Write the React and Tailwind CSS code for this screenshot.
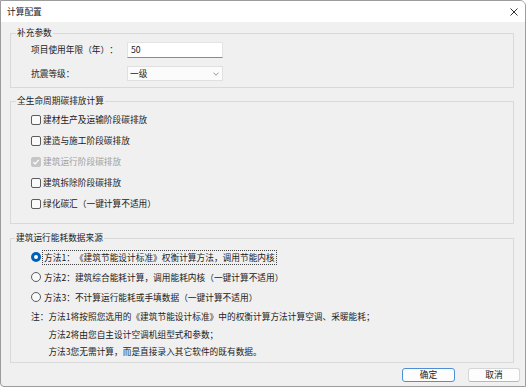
import React from "react";

const font = { fontFamily: '"Noto Sans CJK SC", "Noto Sans", sans-serif' };

function CheckBox({ label, checked, disabled }) {
  return (
    <div className="h-[21px] flex items-center">
      <div
        className={
          "w-[10px] h-[10px] rounded-[2px] border flex items-center justify-center " +
          (disabled
            ? "bg-[#c6c6c6] border-[#c6c6c6]"
            : "bg-[#fafafa] border-[#5c5c5c]")
        }
      >
        {checked && (
          <svg width="8" height="8" viewBox="0 0 8 8">
            <polyline points="1.2,4.2 3.2,6 6.8,1.8" fill="none" stroke="#fff" strokeWidth="1.2" />
          </svg>
        )}
      </div>
      <span className={"ml-[2px] " + (disabled ? "text-[#a0a0a0]" : "text-[#1a1a1a]")}>{label}</span>
    </div>
  );
}

function Radio({ label, selected, focused }) {
  return (
    <div className="h-[20px] flex items-center">
      {selected ? (
        <div className="w-[10px] h-[10px] rounded-full bg-[#005fb8] flex items-center justify-center">
          <div className="w-[4px] h-[4px] rounded-full bg-white" />
        </div>
      ) : (
        <div className="w-[10px] h-[10px] rounded-full border border-[#5c5c5c] bg-[#f8f8f8]" />
      )}
      <span
        className={
          "ml-[1px] px-[1px] leading-[13px] border " +
          (focused ? "border-dotted border-[#444]" : "border-transparent")
        }
      >
        {label}
      </span>
    </div>
  );
}

export default function App() {
  return (
    <div
      className="w-[527px] h-[388px] bg-white text-[8.7px] text-[#1a1a1a] [text-spacing-trim:space-all]"
      style={font}
    >
      <div className="w-[526px] h-[387px] border border-[#9c9c9c] rounded-tr-[6px] rounded-bl-[4px] bg-[#f0f0f0] flex flex-col overflow-hidden">
        {/* title bar */}
        <div className="h-[21px] shrink-0 bg-white flex items-center justify-between pl-[6px] pr-[7px]">
          <span className="leading-[12px]">计算配置</span>
          <svg width="8" height="8" viewBox="0 0 8 8">
            <path d="M0.5 0.5 L7.5 7.5 M7.5 0.5 L0.5 7.5" stroke="#333" strokeWidth="1" fill="none" />
          </svg>
        </div>

        <div className="flex flex-col pl-[9px] pr-[11px]">
          {/* group 1 */}
          <fieldset className="mt-[5px] border border-[#d9d9d9]">
            <legend className="ml-[5px] px-[1px] leading-[12px]">补充参数</legend>
            <div className="pl-[20px] pt-[3px] pb-[6px]">
              <div className="h-[16px] flex items-center">
                <span className="w-[96px]">项目使用年限（年）：</span>
                <div className="w-[96px] h-[16px] bg-white border border-[#e3e3e3] border-b-[#8a8a8a] flex items-center pl-[3px]">
                  50
                </div>
              </div>
              <div className="h-[15px] mt-[8px] flex items-center">
                <span className="w-[96px]">抗震等级：</span>
                <div className="w-[96px] h-[15px] bg-[#fbfbfb] border border-[#e0e0e0] flex items-center justify-between pl-[2px] pr-[3px]">
                  <span>一级</span>
                  <svg width="6" height="4" viewBox="0 0 6 4">
                    <polyline points="0.5,0.8 3,3.2 5.5,0.8" fill="none" stroke="#8a8a8a" strokeWidth="0.9" />
                  </svg>
                </div>
              </div>
            </div>
          </fieldset>

          {/* group 2 */}
          <fieldset className="mt-[7px] border border-[#d9d9d9]">
            <legend className="ml-[5px] px-[1px] leading-[12px]">全生命周期碳排放计算</legend>
            <div className="pl-[20px] pt-[2px] pb-[9px]">
              <CheckBox label="建材生产及运输阶段碳排放" />
              <CheckBox label="建造与施工阶段碳排放" />
              <CheckBox label="建筑运行阶段碳排放" checked disabled />
              <CheckBox label="建筑拆除阶段碳排放" />
              <CheckBox label="绿化碳汇（一键计算不适用）" />
            </div>
          </fieldset>

          {/* group 3 */}
          <fieldset className="mt-[8px] border border-[#d9d9d9]">
            <legend className="ml-[4px] px-[1px] leading-[12px]">建筑运行能耗数据来源</legend>
            <div className="pl-[20px] pt-[3px] pb-[1px]">
              <Radio label="方法1：《建筑节能设计标准》权衡计算方法，调用节能内核" selected focused />
              <Radio label="方法2：建筑综合能耗计算，调用能耗内核（一键计算不适用）" />
              <Radio label="方法3：不计算运行能耗或手填数据（一键计算不适用）" />
              <div className="leading-[17.5px] text-[#222] mt-[1px]">
                <div>注：方法1将按照您选用的《建筑节能设计标准》中的权衡计算方法计算空调、采暖能耗；</div>
                <div className="pl-[17.4px]">方法2将由您自主设计空调机组型式和参数；</div>
                <div className="pl-[17.4px]">方法3您无需计算，而是直接录入其它软件的既有数据。</div>
              </div>
            </div>
          </fieldset>
        </div>

        {/* buttons */}
        <div className="mt-[5px] flex justify-end gap-[13px] pr-[5px]">
          <button className="w-[53px] h-[14px] rounded-[3px] border border-[#4c8fd6] bg-[#fdfdfd] flex items-center justify-center leading-[12px]">
            确定
          </button>
          <button className="w-[52px] h-[14px] rounded-[3px] border border-[#d6d6d6] border-b-[#b8b8b8] bg-[#fdfdfd] flex items-center justify-center leading-[12px]">
            取消
          </button>
        </div>
      </div>
    </div>
  );
}
